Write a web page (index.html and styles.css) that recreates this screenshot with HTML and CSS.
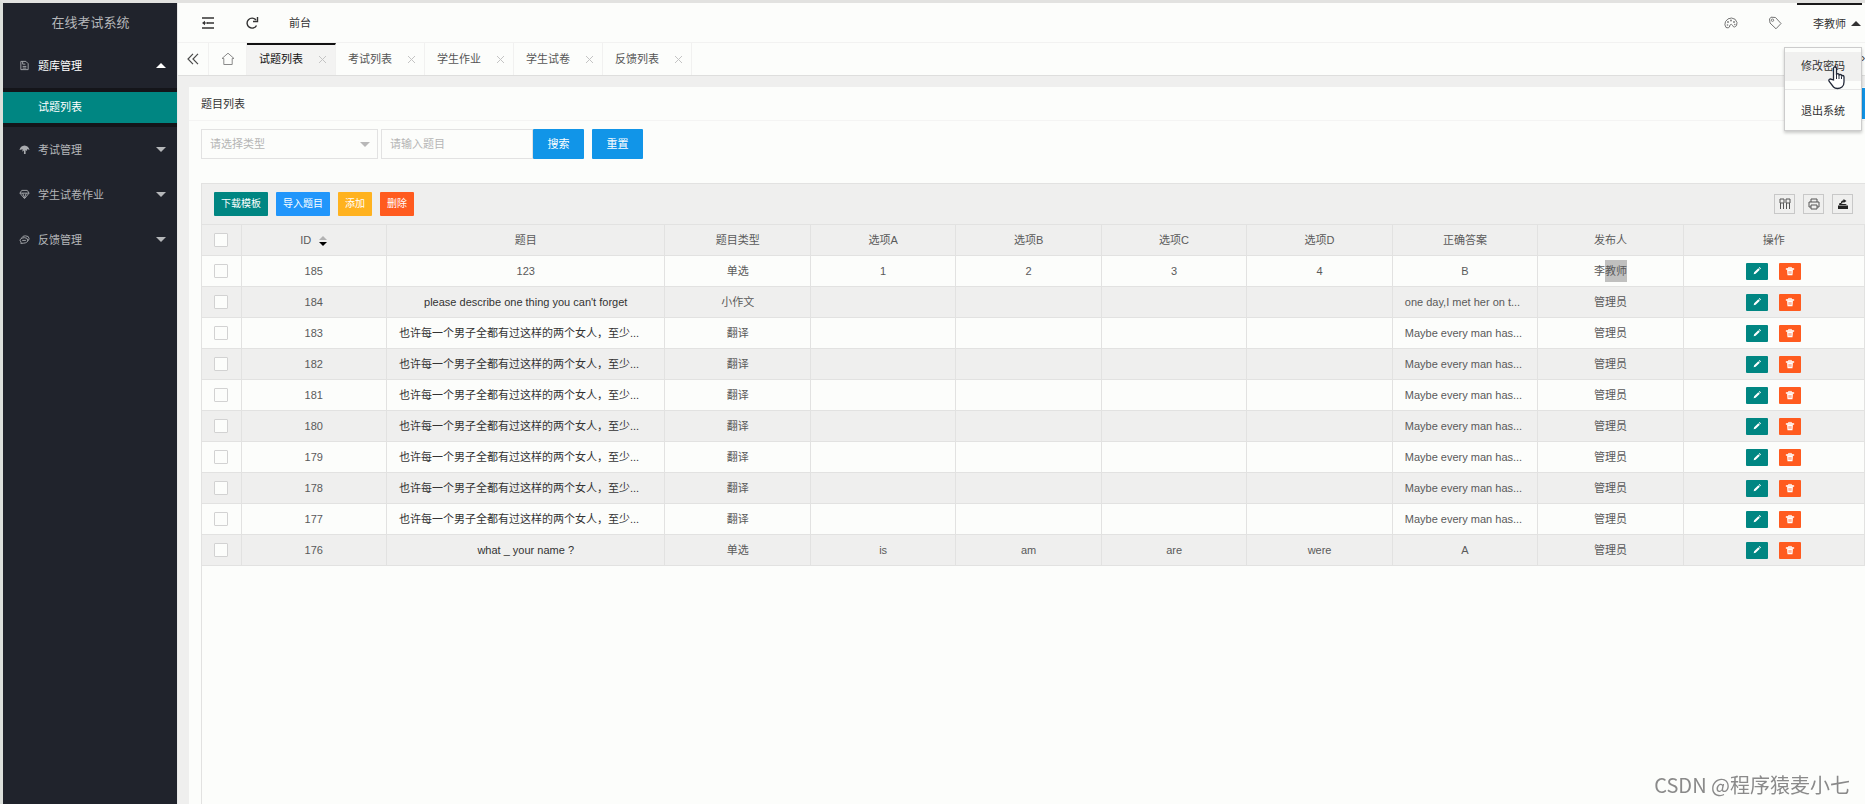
FILE: index.html
```html
<!DOCTYPE html>
<html lang="zh-CN">
<head>
<meta charset="utf-8">
<title>在线考试系统</title>
<link rel="stylesheet" href="styles.css">
</head>
<body>
<svg class="defs" aria-hidden="true">
  <symbol id="i-pen" viewBox="0 0 12 12"><path d="M2 10l.6-2.400 5-5 1.800 1.800-5 5zM8.200 2l.8-.8 1.800 1.800-.8.8z" fill="currentColor"/></symbol>
  <symbol id="i-bin" viewBox="0 0 12 12"><path d="M1.500 3h9v1.200h-9zM4.200 3V1.700h3.600V3" fill="none" stroke="currentColor"/><path d="M2.500 4.500h7L9 11H3z" fill="currentColor"/><path d="M4.700 6v3.500M6 6v3.500M7.300 6v3.500" stroke="#ff5722" stroke-width=".6"/></symbol>
</svg>
<div class="app">
  <nav class="side">
    <h1 class="logo">在线考试系统</h1>
    <button class="menu open"><svg class="mi" viewBox="0 0 12 12"><path d="M2 1.500h5.500L10 4v6.500H2zM4 1.500v3h3M4 7h4M4 8.800h4" fill="none" stroke="currentColor"/></svg><span>题库管理</span><i class="tri up"></i></button>
    <div class="sub"><a href="#" class="on">试题列表</a></div>
    <button class="menu"><svg class="mi" viewBox="0 0 12 12"><path d="M.5 6.500Q1.500 2 6 1.500q4.500.5 5.500 5L9 5.500l-.3 2L7.200 6.500v4.500H5.400V7L3.500 8.500 4 5.800z" fill="currentColor"/></svg><span>考试管理</span><i class="tri"></i></button>
    <button class="menu"><svg class="mi" viewBox="0 0 12 12"><path d="M3 1.500h6l2 3-5 6-5-6zM1 4.500h10M4 4.500l2 5 2-5" fill="none" stroke="currentColor"/></svg><span>学生试卷作业</span><i class="tri"></i></button>
    <button class="menu"><svg class="mi" viewBox="0 0 12 12"><path d="M3 4Q4 2 7 2q4 0 4 3 0 2-2 3M6 4q3.500 0 3.500 2.800T5 10l-3 .3.300-1.500Q.500 7.500 1.500 5.700 2.800 4 6 4zM3.500 7h4" fill="none" stroke="currentColor"/></svg><span>反馈管理</span><i class="tri"></i></button>
  </nav>
  <div class="main">
    <header class="top">
      <button aria-label="收起菜单"><svg width="14" height="14" viewBox="0 0 14 14"><path d="M1 2h12M6 7h7M1 12h12" stroke="currentColor" stroke-width="1.300"/><path d="M1 7l3-2.200v4.400z" fill="currentColor"/><path d="M4 7h3" stroke="currentColor"/></svg></button>
      <button aria-label="刷新"><svg width="14" height="14" viewBox="0 0 14 14"><path d="M11.500 9.500A5 5 0 1 1 11 4" fill="none" stroke="currentColor" stroke-width="1.400"/><path d="M12.500 1v4.500H8" fill="none" stroke="currentColor" stroke-width="1.400"/></svg></button>
      <a href="#">前台</a>
      <span class="grow"></span>
      <button class="thin" aria-label="主题"><svg width="14" height="14" viewBox="0 0 14 14"><path d="M2 11.500Q0 9 1.500 5.500 3.500 2 7.500 2 12 2.300 13 6.500q.3 4-2.500 4.500-1.500 0-1.800-1.500Q7.500 7.500 6 9q-.5.500-.5 2-1 1.500-3.500.5z" fill="none" stroke="currentColor" stroke-width=".9"/><circle cx="4" cy="6" r=".9"/><circle cx="7" cy="4.500" r=".9"/><circle cx="10" cy="6" r=".9"/><circle cx="3.500" cy="9" r=".8"/><circle cx="10.800" cy="8.500" r=".7"/></svg></button>
      <button class="thin" aria-label="便签"><svg width="14" height="14" viewBox="0 0 14 14"><path d="M1.500 3L3 1.200l4.500.3L13 7.500 8 12.800 2 7z" fill="none" stroke="currentColor" stroke-width=".9"/><circle cx="4.500" cy="4.200" r="1.200" fill="none" stroke="currentColor" stroke-width=".8"/></svg></button>
      <div class="user">
        <button class="name">李教师<i class="tri up"></i></button>
        <div class="drop">
          <a href="#" class="hover">修改密码</a>
          <hr>
          <a href="#">退出系统</a>
          <svg class="hand" viewBox="0 0 18 24"><path d="M5.500 14V2.500Q5.500 1 7 1t1.500 1.500V9q0-1.300 1.300-1.300T11 9v.7q0-1.200 1.300-1.200t1.200 1.200v.8q0-1 1.200-1t1.300 1.200V16q0 3.500-2 5t-4.500 1.500T5.500 21L1.200 15.500q-.8-1.500.3-2.200t2 .2z" fill="#fff" stroke="#222838" stroke-width="1.300"/><path d="M8.500 9v4M11 9.500V13M13.500 10.500V13" stroke="#222838"/></svg>
        </div>
      </div>
    </header>
    <div class="tabs">
      <button class="back" aria-label="向左"><svg width="12" height="12" viewBox="0 0 12 12"><path d="M6 .8L1 6l5 5.200M11 .8L6 6l5 5.200" fill="none" stroke="currentColor" stroke-width="1.200"/></svg></button>
      <a href="#" class="home" aria-label="首页"><svg width="14" height="14" viewBox="0 0 14 14"><path d="M7 1.200L1 6.500h1.800v6h8.400v-6H13z" fill="none" stroke="currentColor"/></svg></a>
      <a href="#" class="tab on">试题列表<i class="x"></i></a>
      <a href="#" class="tab">考试列表<i class="x"></i></a>
      <a href="#" class="tab">学生作业<i class="x"></i></a>
      <a href="#" class="tab">学生试卷<i class="x"></i></a>
      <a href="#" class="tab">反馈列表<i class="x"></i></a>
      <span class="grow"></span>
      <span class="next">›</span>
    </div>
    <main class="body">
      <section class="card">
        <div class="card-head"><h2>题目列表</h2><span class="stub"></span></div>
        <form class="search">
          <div class="pick"><select aria-label="类型"><option>请选择类型</option></select><i class="tri"></i></div>
          <input type="text" aria-label="题目" placeholder="请输入题目">
          <button type="button" class="go">搜索</button>
          <button type="reset" class="reset">重置</button>
        </form>
        <div class="grid">
          <div class="tools">
            <button class="b teal">下载模板</button>
            <button class="b blue">导入题目</button>
            <button class="b amber">添加</button>
            <button class="b red">删除</button>
            <span class="grow"></span>
            <button class="t" aria-label="筛选列"><svg width="12" height="12" viewBox="0 0 12 12"><path d="M1 1h4v4H1zM7 1h4v4H7zM1.500 5v6M4.500 5v6M7.500 5v6M10.500 5v6" fill="none" stroke="#555"/></svg></button>
            <button class="t" aria-label="打印"><svg width="12" height="12" viewBox="0 0 12 12"><path d="M3 4V1h6v3M3 9H1V4h10v5H9M3 7h6v4H3z" fill="none" stroke="#555"/></svg></button>
            <button class="t" aria-label="导出"><svg width="12" height="12" viewBox="0 0 12 12"><path d="M1 7.500h10V11H1zM2 7l.5-2H4l.5 1h4l1.500 1z" fill="#222"/><path d="M4.500 5.500Q4.500 3 7 3" fill="none" stroke="#222" stroke-width="1.300"/><path d="M6.500 1L9.500 3 6.500 5z" fill="#222"/></svg></button>
          </div>
          <table>
            <colgroup><col class="c-check"><col class="c"><col class="c-title"><col class="c"><col class="c"><col class="c"><col class="c"><col class="c"><col class="c"><col class="c"><col></colgroup>
            <thead><tr><th><input type="checkbox" aria-label="全选"></th><th>ID<span class="sort"><i class="tri up"></i><i class="tri"></i></span></th><th>题目</th><th>题目类型</th><th>选项A</th><th>选项B</th><th>选项C</th><th>选项D</th><th>正确答案</th><th>发布人</th><th>操作</th></tr></thead>
            <tbody id="rows"></tbody>
          </table>
        </div>
      </section>
    </main>
  </div>
</div>
<div class="mark">CSDN @程序猿麦小七</div>
<script src="rows.js"></script>
</body>
</html>
```
FILE: rows.js
```js
const story = '也许每一个男子全都有过这样的两个女人，至少...';
const reply = 'Maybe every man has...';
const rows = [
  [185, '123', '单选', '1', '2', '3', '4', 'B', '李<span class="sel">教师</span>'],
  [184, "please describe one thing you can't forget", '小作文', '', '', '', '', 'one day,I met her on t...', '管理员']
];
for (let id = 183; id > 176; id--) {
  rows.push([id, story, '翻译', '', '', '', '', reply, '管理员']);
}
rows.push([176, 'what _ your name ?', '单选', 'is', 'am', 'are', 'were', 'A', '管理员']);

document.getElementById('rows').innerHTML = rows.map(function (r) {
  const cells = r.map(function (v, i) {
    const names = [];
    if (i === 1 && r[0] !== 185) names.push('dark');
    if (String(v).endsWith('...')) names.push('long');
    return '<td class="' + names.join(' ') + '">' + v + '</td>';
  }).join('');
  return '<tr><td><input type="checkbox" aria-label="选择 ' + r[0] + '"></td>' + cells +
    '<td><div class="ops"><button class="op teal" aria-label="编辑"><svg width="10" height="10"><use href="#i-pen"/></svg></button>' +
    '<button class="op red" aria-label="删除"><svg width="10" height="10"><use href="#i-bin"/></svg></button></div></td></tr>';
}).join('');
```
FILE: styles.css
```css
* { box-sizing: border-box; }
body {
  margin: 0;
  background: #fcfdfb;
  color: #4a4a4a;
  font: 11px/16px "Liberation Sans", "Noto Sans CJK SC", sans-serif;
  overflow: hidden;
}
button, input, select { font: inherit; color: inherit; border: 0; margin: 0; padding: 0; background: none; }
a { color: inherit; text-decoration: none; }
h1, h2 { margin: 0; font-size: 11px; font-weight: 400; }
svg { display: block; }
.defs { position: absolute; width: 0; height: 0; }
.grow { flex: 1; }

.tri { border: 5px solid transparent; border-top-color: currentColor; border-bottom: 0; width: 0; height: 0; }
.tri.up { border-top: 0; border-bottom: 5px solid currentColor; }

.app {
  display: grid;
  grid-template-columns: 175px minmax(0, 1fr);
  min-height: 100vh;
  border-top: 3px solid #e2e2e0;
  border-left: 3px solid #dcdfdb;
}

.side { background: #20232c; color: #b5b7ba; display: flex; flex-direction: column; border-right: 1px solid #e8e8e8; }
.side .logo { font-size: 13px; line-height: 40px; padding-left: 1px; text-align: center; }
.menu { display: flex; align-items: center; height: 45px; padding: 0 11px 0 16px; text-align: left; }
.menu span { flex: 1; }
.menu.open { color: #fff; }
.mi { width: 11px; height: 11px; margin-right: 8px; color: #a9abaf; }
.sub { background: #14151a; padding: 4px 0; }
.sub a { display: block; line-height: 31px; padding-left: 35px; color: #fff; background: #008682; }

.main { display: flex; flex-direction: column; background: #efefee; }
.top { display: flex; align-items: center; height: 40px; padding: 0 3px 0 23px; gap: 30px; background: #fcfdfb; border-bottom: 1px solid #f2f2f1; color: #333; }
.top a { color: #333; }
.top .thin { color: #666; fill: #777; }
.user { position: relative; align-self: stretch; margin-left: -15px; }
.user .name { display: flex; align-items: center; gap: 5px; height: 39px; padding: 0 1px 0 16px; border-top: 2px solid #191919; }
.drop { position: absolute; z-index: 5; right: 0; top: 44px; width: 78px; padding: 4px 0; background: #fcfdfb; border: 1px solid #ccc; box-shadow: 0 2px 3px #0003; }
.drop a { display: block; line-height: 29px; text-align: center; }
.drop .hover { background: #f0f0ef; }
.drop hr { margin: 8px 0 7px; border: 0; border-top: 1px solid #e6e6e6; }
.hand { position: absolute; width: 18px; height: 24px; left: 43px; top: 18px; }

.tabs { display: flex; height: 33px; background: #fcfdfb; border-bottom: 1px solid #dededd; }
.tabs > * { border-right: 1px solid #f1f1f0; }
.tabs .grow { border: 0; }
.back { width: 31px; padding-left: 9px; }
.home { width: 38px; display: flex; align-items: center; justify-content: center; color: #8a8a8a; }
.tab { width: 89px; display: flex; align-items: center; justify-content: space-between; padding: 0 9px 0 12px; color: #555; }
.tab.on { color: #111; background: #f3f3f2; border-top: 2px solid #111; padding-bottom: 2px; }
.next { width: 4px; overflow: hidden; line-height: 30px; font-size: 13px; border: 0; }
.x { width: 7px; height: 7px; background: linear-gradient(45deg, transparent 45%, #c4c4c4 45% 55%, transparent 55%), linear-gradient(-45deg, transparent 45%, #c4c4c4 45% 55%, transparent 55%); }

.body { flex: 1; display: flex; padding: 11px 0 0 11px; }
.card { flex: 1; min-width: 0; display: flex; flex-direction: column; background: #fcfdfb; }
.card-head { display: flex; align-items: center; justify-content: space-between; height: 34px; padding-left: 12px; border-bottom: 1px solid #f4f4f3; color: #333; }
.stub { width: 3px; height: 31px; background: #1195e8; }
.search { display: flex; padding: 8px 12px 24px; height: 62px; }
.pick { position: relative; width: 177px; margin-right: 3px; border: 1px solid #e2e2e2; }
.pick select { width: 100%; height: 100%; padding: 0 8px; appearance: none; color: #b5b5b5; }
.pick .tri { position: absolute; right: 7px; top: 12px; color: #b8b8b8; }
.search input { width: 152px; padding: 0 8px; border: 1px solid #e2e2e2; }
.search input::placeholder { color: #b5b5b5; opacity: 1; }
.go, .reset { background: #1195e8; color: #fff; border-radius: 1px; width: 51px; }
.reset { margin-left: 8px; }

.grid { flex: 1; margin-left: 12px; border-left: 1px solid #e2e2e1; border-top: 1px solid #e2e2e1; }
.tools { display: flex; align-items: center; gap: 8px; height: 40px; padding: 0 12px; background: #efefee; }
.b { height: 24px; padding: 0 7px; font-size: 10px; color: #fff; border-radius: 1px; }
.teal { background: #008682; }
.blue { background: #2196fb; }
.amber { background: #ffb21f; }
.red { background: #ff5b1f; }
.t { width: 21px; height: 20px; border: 1px solid #c8c8c8; display: grid; place-items: center; }

table { width: 100%; table-layout: fixed; border-collapse: collapse; }
.c-check { width: 39px; }
.c { width: 8.75%; }
.c-title { width: 16.75%; }
th, td { height: 31px; padding: 0 8px; border: 1px solid #e2e2e1; border-left: 0; font-weight: 400; text-align: center; white-space: nowrap; overflow: hidden; color: #5a5a5a; }
th { background: #efefee; }
td.dark { color: #333; }
td.long { padding: 0 0 0 12px; text-align: left; }
tbody tr:nth-child(even) { background: #efefee; }
input[type="checkbox"] { appearance: none; display: block; width: 14px; height: 14px; margin: 0 auto; border: 1px solid #d2d2d2; border-radius: 1px; background: #fcfdfb; }
.sort { display: inline-flex; flex-direction: column; gap: 2px; margin-left: 8px; vertical-align: middle; }
.sort .tri { border-width: 0 4px 4px; color: #b2b2b2; }
.sort .tri:last-child { border-width: 4px 4px 0; color: #000; }
.sel { display: inline-block; line-height: 22px; background: #c0c0bf; }
.ops { display: flex; justify-content: center; gap: 11px; }
.op { width: 22px; height: 17px; border-radius: 1px; color: #fff; display: grid; place-items: center; }

.mark { position: fixed; right: 15px; bottom: 6px; font-family: "Noto Sans CJK SC", sans-serif; font-size: 20px; line-height: 26px; color: #8a8a8a; }
```
